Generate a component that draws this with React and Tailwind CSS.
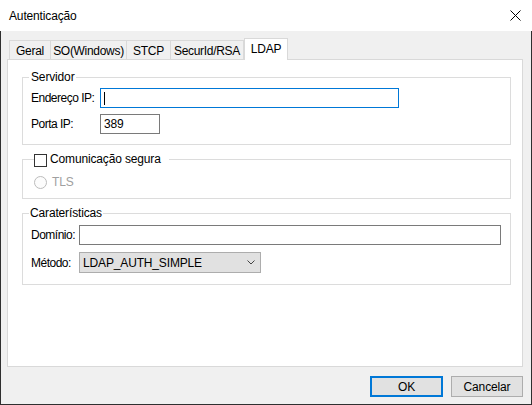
import React from "react";

const tabs = ["Geral", "SO(Windows)", "STCP", "SecurId/RSA"];
const tabWidths = ["w-[41px]", "w-[76px]", "w-[44px]", "w-[74px]"];

function Tab({ label, width }) {
  return (
    <div
      className={`${width} h-[19px] border-l border-t border-[#d9d9d9] bg-[#f0f0f0] flex justify-center pt-[3px] leading-[14px] whitespace-nowrap tracking-[-0.3px] last:border-r`}
    >
      {label}
    </div>
  );
}

function TextBox({ className = "", children, focused = false }) {
  return (
    <div
      className={`h-[20px] shrink-0 bg-white border flex items-center pl-[3px] ${
        focused ? "border-[#0078d7]" : "border-[#7a7a7a]"
      } ${className}`}
    >
      {children}
    </div>
  );
}

function Label({ width, children }) {
  return (
    <span className={`${width} shrink-0 whitespace-nowrap leading-[14px] tracking-[-0.5px]`}>
      {children}
    </span>
  );
}

export default function App() {
  return (
    <div className="w-[532px] h-[405px] flex flex-col bg-[#f0f0f0] text-[12px] text-black font-['Liberation_Sans',Arial,sans-serif] tracking-[-0.15px] overflow-hidden select-none">
      {/* title bar */}
      <div className="h-[31px] shrink-0 bg-white flex items-center justify-between pl-[9px] pr-[10px]">
        <span className="leading-[14px]">Autenticação</span>
        <svg width="11" height="11" viewBox="0 0 11 11" className="mr-[1px]">
          <path d="M0.5 0.5 L10.5 10.5 M10.5 0.5 L0.5 10.5" stroke="#000" strokeWidth="1" fill="none" />
        </svg>
      </div>

      {/* dialog body */}
      <div className="flex-1 min-h-0 flex flex-col border-x border-b border-[#2f2f2f] pt-[7px] pl-[6px] pr-[8px] pb-[7px]">
        {/* tab strip */}
        <div className="h-[21px] shrink-0 flex items-end pl-[2px]">
          <div className="flex items-end">
            {tabs.map((t, i) => (
              <Tab key={t} label={t} width={tabWidths[i]} />
            ))}
          </div>
          <div className="relative z-10 -mb-px w-[44px] h-[22px] bg-white border-x border-t border-[#d9d9d9] flex justify-center pt-[3px] leading-[14px]">
            LDAP
          </div>
        </div>

        {/* tab page */}
        <div className="flex-1 min-h-0 bg-white border border-[#d9d9d9] pt-[10px] pl-[14px] pr-[11px] flex flex-col gap-[7px]">
          {/* Servidor */}
          <fieldset className="border border-[#dcdcdc]">
            <legend className="ml-[6px] px-[2px] leading-[14px]">Servidor</legend>
            <div className="pt-[4px] pb-[10px] pl-[8px] flex flex-col gap-[6px]">
              <div className="flex items-center">
                <Label width="w-[69px]">Endereço IP:</Label>
                <TextBox focused className="w-[299px]">
                  <span className="w-px h-[13px] bg-black" />
                </TextBox>
              </div>
              <div className="flex items-center">
                <Label width="w-[69px]">Porta IP:</Label>
                <TextBox className="w-[60px]">
                  <span className="leading-[14px]">389</span>
                </TextBox>
              </div>
            </div>
          </fieldset>

          {/* Comunicação segura */}
          <fieldset className="border border-[#dcdcdc]">
            <legend className="ml-[11px] pr-[8px] leading-[14px]">
              <span className="flex items-start">
                <span className="mt-[2px] w-[13px] h-[13px] border border-[#333333] bg-white shrink-0" />
                <span className="ml-[3px] whitespace-nowrap">Comunicação segura</span>
              </span>
            </legend>
            <div className="pt-[8px] pb-[9px] pl-[11px] flex items-center h-[31px]">
              <span className="w-[13px] h-[13px] rounded-full border border-[#bcbcbc] bg-[#fcfcfc] shrink-0" />
              <span className="ml-[5px] text-[#a0a0a0] leading-[14px]">TLS</span>
            </div>
          </fieldset>

          {/* Caraterísticas */}
          <fieldset className="border border-[#dcdcdc]">
            <legend className="ml-[6px] px-[1px] leading-[14px]">Caraterísticas</legend>
            <div className="pt-[5px] pb-[11px] pl-[8px] flex flex-col gap-[7px]">
              <div className="flex items-center">
                <Label width="w-[48px]">Domínio:</Label>
                <TextBox className="w-[422px]" />
              </div>
              <div className="flex items-center">
                <Label width="w-[48px]">Método:</Label>
                <div className="w-[182px] h-[21px] shrink-0 bg-[#e1e1e1] border border-[#adadad] flex items-center justify-between pl-[3px] pr-[5px]">
                  <span className="leading-[14px]">LDAP_AUTH_SIMPLE</span>
                  <svg width="8" height="5" viewBox="0 0 8 5">
                    <path d="M0.5 0.5 L4 4 L7.5 0.5" stroke="#444" strokeWidth="1" fill="none" />
                  </svg>
                </div>
              </div>
            </div>
          </fieldset>
        </div>

        {/* buttons */}
        <div className="mt-[9px] h-[21px] shrink-0 flex justify-end gap-[8px]">
          <div className="w-[73px] h-[21px] bg-[#e1e1e1] border-2 border-[#0078d7] flex items-center justify-center leading-[14px]">
            OK
          </div>
          <div className="w-[72px] h-[21px] bg-[#e1e1e1] border border-[#adadad] flex items-center justify-center leading-[14px]">
            Cancelar
          </div>
        </div>
      </div>
    </div>
  );
}
